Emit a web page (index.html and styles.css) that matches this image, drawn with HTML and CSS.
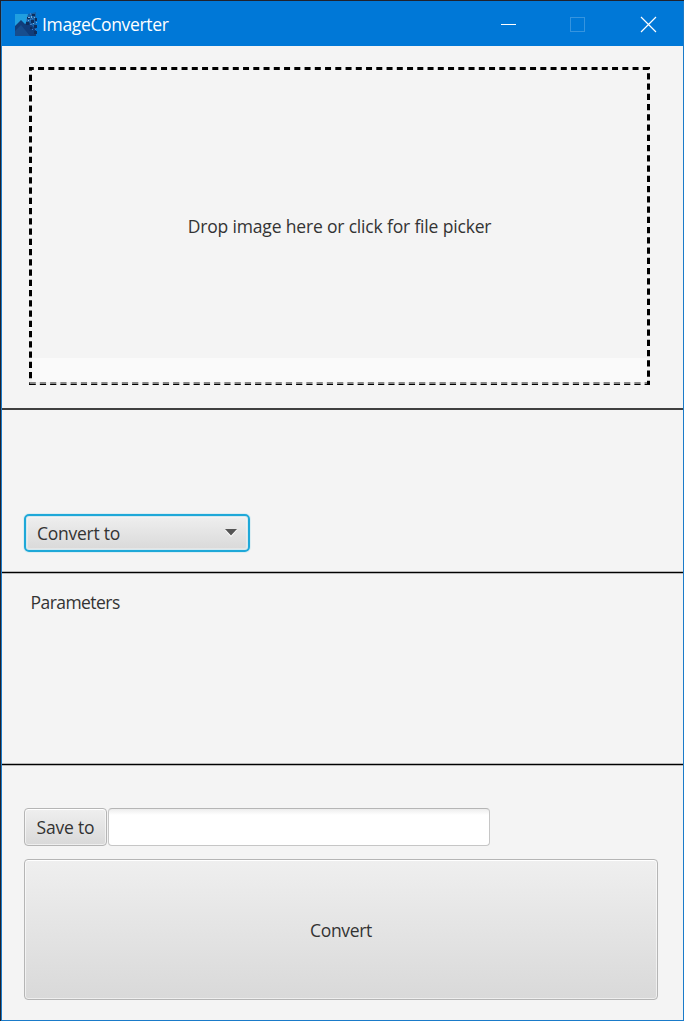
FILE: index.html
```html
<!DOCTYPE html>
<html lang="en">
<head>
<meta charset="utf-8">
<title>ImageConverter</title>
<link rel="stylesheet" href="styles.css">
</head>
<body>
<div class="window">
  <header class="titlebar">
    <svg class="logo" width="23" height="24" viewBox="0 0 23 24">
      <path fill="#209fe0" d="M1 2H17V23H1z"/>
      <path fill="#1762a8" d="M14 2L22 0V23H9z"/>
      <path fill="#103d7b" d="M1 14L7 8L11 12L15 10L22 18V24H1z"/>
      <path fill="#174d8d" d="M1 19L7 13L16 24H1z"/>
      <path fill="#0e2d5c" d="M13 5h3v2h-3zM18 2h3v2h-3zM17 8h3v3h-3zM12 10h3v3h-3zM20 13h3v3h-3zM16 15h2v2h-2zM20 19h3v3h-3zM21 6h2v3h-2z"/>
      <path fill="#7aaed8" d="M14 5h2v1h-2zM17 4h1v2h-1zM14 8h1v1h-1zM20 5h1v1h-1zM19 11h1v1h-1zM22 10h1v1h-1z"/>
      <path fill="#427ac1" d="M16 1h1v2h-1zM12 7h1v2h-1zM16 7h1v1h-1zM16 12h2v1h-2zM18 17h1v1h-1zM21 17h1v1h-1zM18 6h1v1h-1z"/>
    </svg>
    <h1 class="title"><span class="t-title">ImageConverter</span></h1>
    <svg class="controls" width="160" height="20" viewBox="500 13 160 20" fill="none">
      <path stroke="#fff" d="M501 23.5H516"/>
      <rect stroke="#3594df" x="570.5" y="16.5" width="14" height="14"/>
      <path stroke="#fff" stroke-width="1.2" d="M641 16L656 31M656 16L641 31"/>
    </svg>
  </header>
  <main>
    <section class="source">
      <div class="dropzone">
        <svg class="dashes" width="621" height="318" viewBox="29 67 621 318" fill="none" stroke="#000" stroke-width="3">
          <path stroke-dasharray="6 4.25" stroke-dashoffset="1.2" d="M29 68.5H650"/>
          <path stroke-dasharray="6.2 4.05" stroke-dashoffset="2.4" d="M30.5 67V385"/>
          <path stroke-dasharray="6.2 4.05" stroke-dashoffset="3.9" d="M648.5 67V385"/>
          <path stroke="#888" stroke-width="2" stroke-dasharray="6.2 4.05" d="M29.6 383H650"/>
          <path stroke-width="1" stroke-dasharray="6.2 4.05" d="M29.6 384.5H650"/>
          <path d="M647 383.5H650"/>
        </svg>
        <div class="prompt"><span class="t-prompt">Drop image here or click for file picker</span></div>
        <div class="strip"></div>
      </div>
    </section>
    <section class="format">
      <div class="combo"><span class="t-combo">Convert to</span>
        <svg width="12" height="8" viewBox="0 0 12 8"><path fill="#fff" d="M0 1H12L6 8z"/><path fill="#555" d="M0 0H12L6 6.5z"/></svg>
      </div>
    </section>
    <section class="params"><span class="t-params">Parameters</span></section>
    <section class="output">
      <div class="row">
        <button class="btn save"><span class="t-save">Save to</span></button>
        <input class="path" type="text" aria-label="Save path">
      </div>
      <button class="btn convert"><span class="t-convert">Convert</span></button>
    </section>
  </main>
</div>
</body>
</html>
```
FILE: styles.css
```css
* { box-sizing: border-box; }
body {
  margin: 0;
  height: 1021px;
  padding: 1px 0 0 1px;
  overflow: hidden;
  background: #20222c;
  font: 17.5px/24px "Open Sans", "Noto Sans", sans-serif;
  color: #333;
}
span { white-space: nowrap; }
.window {
  display: flex;
  flex-direction: column;
  height: 1020px;
  border: 1px solid #1a7bc9;
  border-top-color: #0078d7;
  background: #f4f4f4;
}
.titlebar {
  display: flex;
  align-items: center;
  height: 44px;
  padding: 0 23px 0 12px;
  background: #0078d7;
  color: #fff;
}
.logo { margin-right: 5px; }
.title {
  flex: 1;
  margin: 0;
  font: inherit;
}
.controls { display: block; }
main {
  flex: 1;
  display: flex;
  flex-direction: column;
}
.source {
  height: 364px;
  padding: 21px 0 0 27px;
  border-bottom: 2px solid #404040;
}
.dropzone {
  position: relative;
  display: flex;
  flex-direction: column;
  width: 621px;
  height: 318px;
  padding: 3px;
}
.dashes {
  position: absolute;
  inset: 0;
}
.prompt {
  height: 288px;
  padding-top: 144px;
  text-align: center;
}
.strip {
  height: 24px;
  background: #fafafa;
}
.format {
  height: 163px;
  padding: 104px 0 0 22px;
  border-bottom: 1px solid #000;
  box-shadow: 0 1px #b7b7b7, inset 0 -1px #b7b7b7;
}
.combo {
  display: flex;
  align-items: center;
  justify-content: space-between;
  width: 226px;
  height: 38px;
  padding: 0 11px;
  border: 2px solid #1ea8d8;
  border-radius: 5px;
  background: linear-gradient(#efefef, #d9d9d9);
  box-shadow: 0 0 0 1px #dcedf2, inset 0 0 0 1px #d4e8ef, inset 0 0 0 2px #ffffff50;
}
.params {
  height: 192px;
  padding: 17px 0 0 28.5px;
  border-bottom: 1px solid #000;
  box-shadow: 0 1px #b7b7b7, inset 0 -1px #b7b7b7;
}
.output { padding: 43px 0 0 22px; }
.row {
  display: flex;
  gap: 1px;
  margin-bottom: 13px;
}
.btn {
  display: flex;
  align-items: center;
  justify-content: center;
  padding: 0;
  border: 1px solid #b5b5b5;
  border-radius: 4px;
  background: linear-gradient(#efefef, #d9d9d9);
  box-shadow: inset 0 1px #fff, inset 0 0 0 1px #ffffff90;
  font: inherit;
  color: inherit;
}
.save {
  width: 83px;
  height: 38px;
}
.path {
  width: 382px;
  height: 38px;
  border: 1px solid #c6c6c6;
  border-top-color: #b5b5b5;
  border-radius: 4px;
  background: linear-gradient(#ededed, #fff 6px);
}
.convert {
  width: 634px;
  height: 141px;
}
.t-title { letter-spacing: -0.35px; }
.t-prompt { letter-spacing: -0.17px; }
.t-combo { letter-spacing: -0.25px; }
.t-params { letter-spacing: -0.55px; }
.t-save { letter-spacing: -0.2px; }
.t-convert { letter-spacing: -0.35px; }
```
